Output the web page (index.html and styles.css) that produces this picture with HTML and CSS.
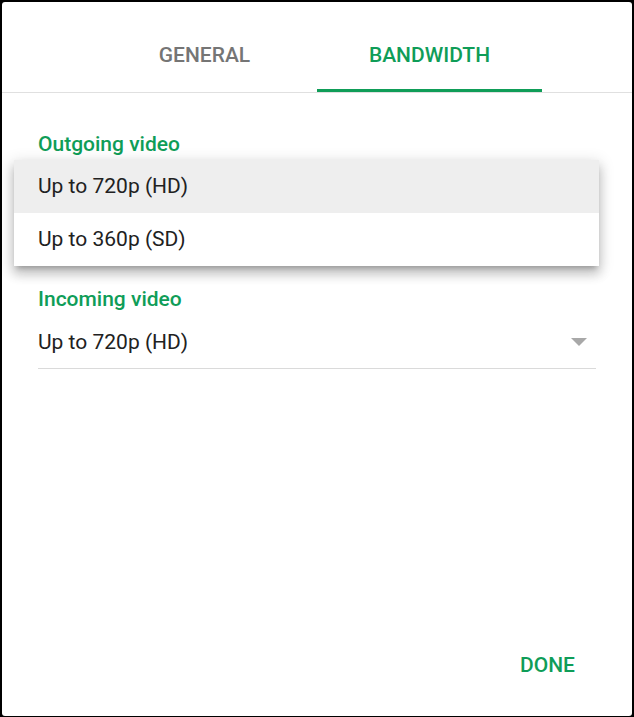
FILE: index.html
```html
<!DOCTYPE html>
<html lang="en">
<head>
<meta charset="utf-8">
<title>Settings</title>
<link rel="stylesheet" href="styles.css">
</head>
<body>
<div class="dialog">
  <div class="tabs">
    <div class="tab">GENERAL</div>
    <div class="tab active">BANDWIDTH</div>
  </div>
  <div class="content">
    <div class="field first">
      <div class="label">Outgoing video</div>
      <div class="select">
        <span class="value">Up to 720p (HD)</span>
        <span class="arrow"></span>
        <div class="menu">
          <div class="item selected">Up to 720p (HD)</div>
          <div class="item">Up to 360p (SD)</div>
        </div>
      </div>
    </div>
    <div class="field">
      <div class="label">Incoming video</div>
      <div class="select">
        <span class="value">Up to 720p (HD)</span>
        <span class="arrow"></span>
      </div>
    </div>
  </div>
  <div class="footer">
    <div class="button">DONE</div>
  </div>
</div>
</body>
</html>
```
FILE: styles.css
```css
html, body {
  margin: 0;
  padding: 0;
  background: #000;
}
body {
  font-family: Roboto, "Noto Sans", "Liberation Sans", sans-serif;
  color: #212121;
}
.dialog {
  margin: 2px 2px 1px 2px;
  height: 714px;
  background: #fff;
  border-radius: 3px;
  display: flex;
  flex-direction: column;
  overflow: hidden;
}
.tabs {
  display: flex;
  justify-content: center;
  padding-top: 41px;
  border-bottom: 1px solid #e0e0e0;
}
.tab {
  width: 225px;
  text-align: center;
  font-size: 21px;
  font-weight: 500;
  line-height: 24px;
  color: #757575;
  padding-bottom: 22px;
  border-bottom: 3px solid transparent;
}
.tab.active {
  color: #0f9d58;
  border-bottom-color: #0f9d58;
}
.content {
  flex: 1;
  padding: 39px 36px 0 36px;
}
.field.first {
  margin-bottom: 73px;
}
.label {
  font-size: 21px;
  font-weight: 500;
  line-height: 24px;
  color: #0f9d58;
}
.select {
  position: relative;
  display: flex;
  align-items: center;
  justify-content: space-between;
  padding: 19px 0 14px 0;
  border-bottom: 1px solid #dadada;
}
.value {
  font-size: 21px;
  line-height: 24px;
}
.arrow {
  width: 0;
  height: 0;
  margin-right: 9px;
  border-left: 8.5px solid transparent;
  border-right: 8.5px solid transparent;
  border-top: 8px solid #a8a8a8;
}
.menu {
  position: absolute;
  top: 4px;
  left: -24px;
  right: -3px;
  background: #fff;
  box-shadow: 0 8px 10px 1px rgba(0,0,0,.16), 0 3px 14px 2px rgba(0,0,0,.12), 0 5px 5px -3px rgba(0,0,0,.22);
}
.item {
  height: 53px;
  line-height: 53px;
  padding: 0 24px;
  font-size: 21px;
  color: #212121;
}
.item.selected {
  background: #eeeeee;
}
.footer {
  display: flex;
  justify-content: flex-end;
  padding: 0 57px 39px 0;
}
.button {
  font-size: 21px;
  font-weight: 500;
  line-height: 24px;
  color: #0f9d58;
}
```
